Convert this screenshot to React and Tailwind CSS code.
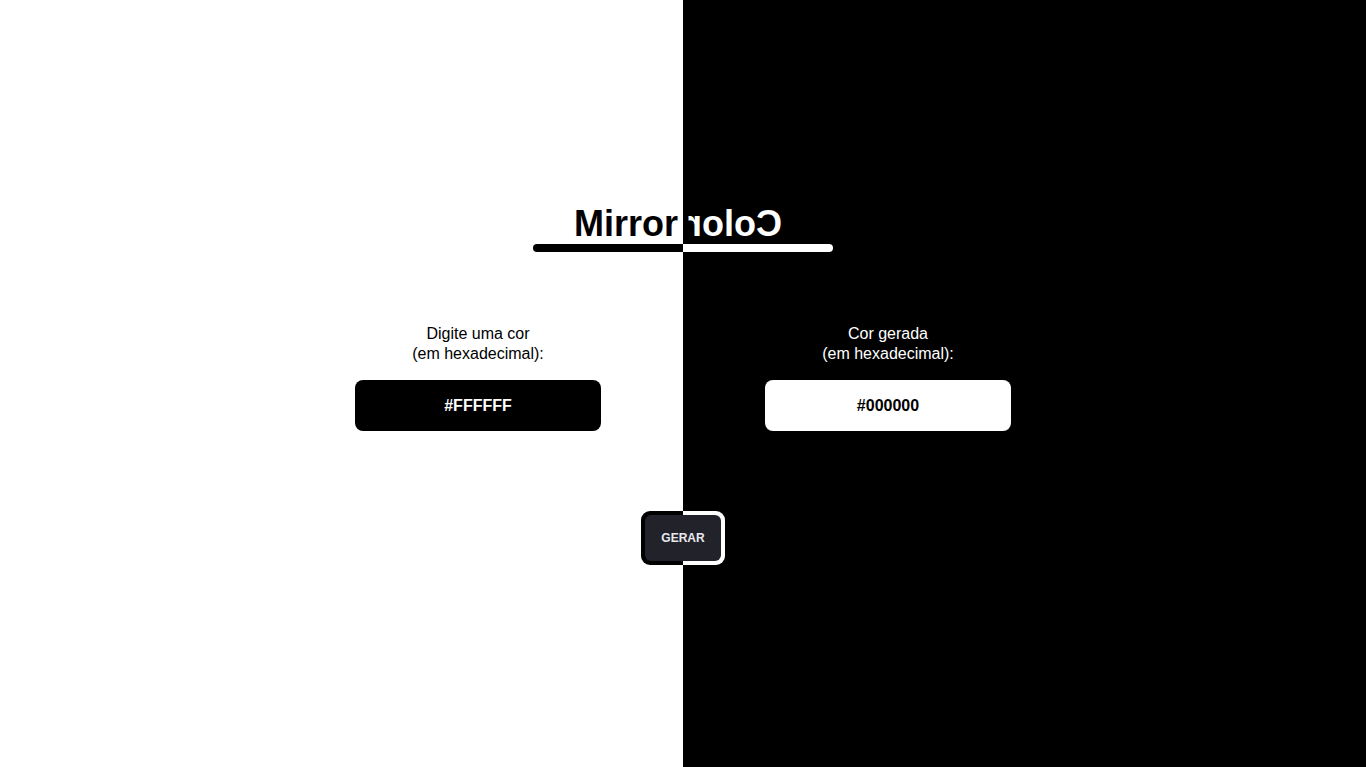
export default function App() {
  return (
    <div className="min-h-screen w-full bg-[linear-gradient(to_right,#ffffff_50%,#000000_50%)] flex flex-col items-center font-['Liberation_Sans',Arial,sans-serif]">
      <div className="pt-[204px] flex flex-col items-center">
        <h1 className="flex text-[36px] leading-[40px] font-bold">
          <span className="w-[200px] flex justify-end">
            <span className="text-black mr-[5px]">Mirror</span>
          </span>
          <span className="w-[200px] flex justify-start">
            <span className="inline-block text-white -scale-x-100 ml-[5px]">Color</span>
          </span>
        </h1>
        <div className="w-[300px] h-[8px] rounded-full bg-[linear-gradient(to_right,#000000_50%,#ffffff_50%)]" />
      </div>

      <div className="mt-[72px] flex gap-[164px]">
        <div className="w-[246px] flex flex-col items-center">
          <p className="text-[16px] leading-[20px] text-center text-black">
            Digite uma cor
            <br />
            (em hexadecimal):
          </p>
          <div className="mt-[16px] w-full h-[51px] rounded-[8px] bg-black text-white font-bold text-[16px] flex items-center justify-center">
            #FFFFFF
          </div>
        </div>
        <div className="w-[246px] flex flex-col items-center">
          <p className="text-[16px] leading-[20px] text-center text-white">
            Cor gerada
            <br />
            (em hexadecimal):
          </p>
          <div className="mt-[16px] w-full h-[51px] rounded-[8px] bg-white text-black font-bold text-[16px] flex items-center justify-center">
            #000000
          </div>
        </div>
      </div>

      <div className="mt-[80px] p-[4px] rounded-[9px] bg-[linear-gradient(to_right,#000000_50%,#ffffff_50%)]">
        <button className="w-[76px] h-[46px] rounded-[6px] bg-[#22222a] text-[#e8e8ee] text-[12px] font-bold flex items-center justify-center">
          GERAR
        </button>
      </div>
    </div>
  );
}
